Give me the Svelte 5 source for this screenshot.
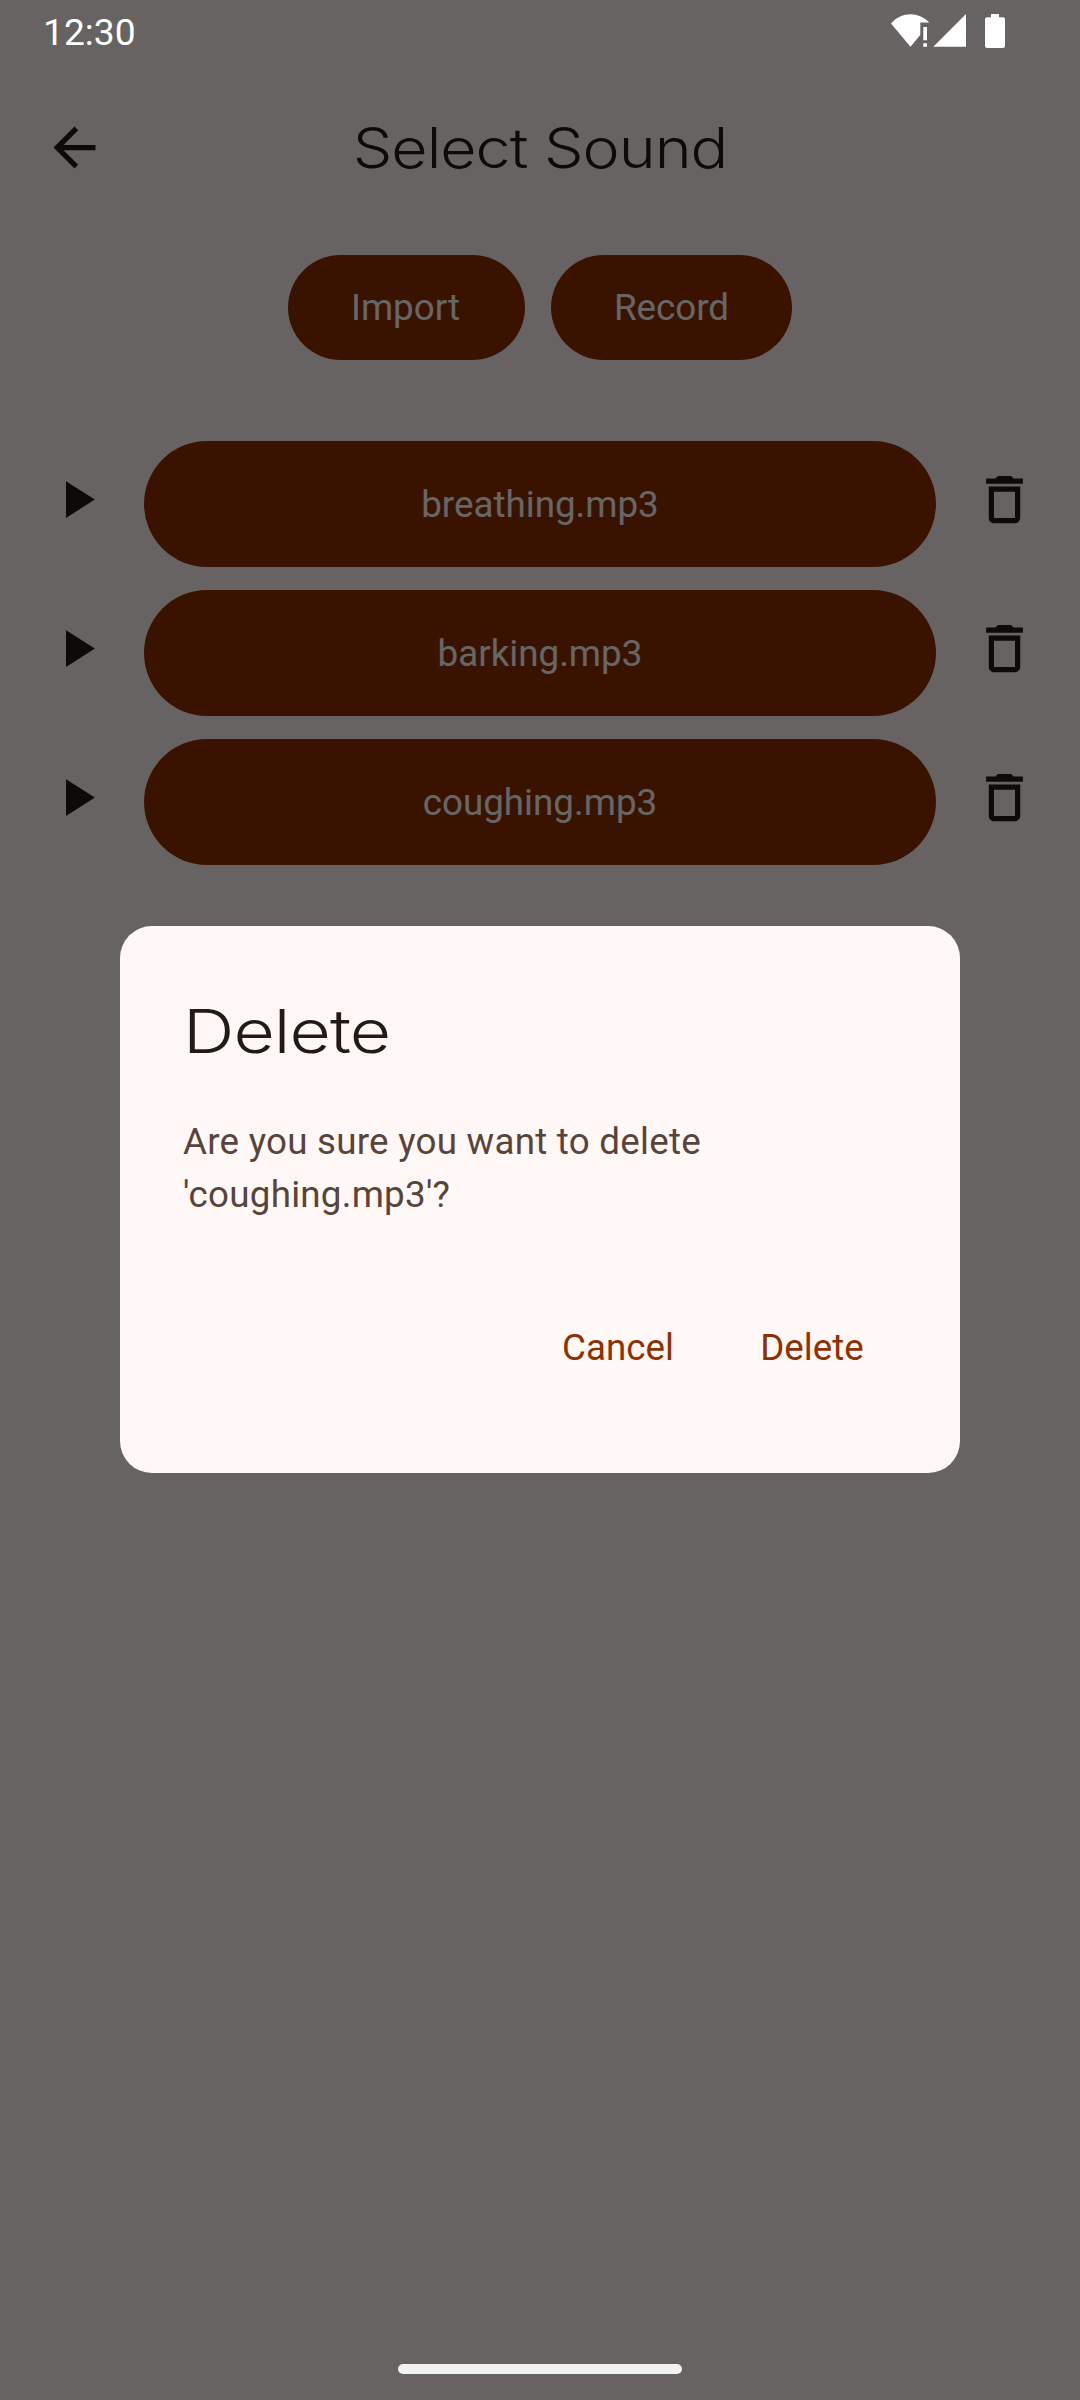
<script>
  const sounds = ['breathing.mp3', 'barking.mp3', 'coughing.mp3'];
  const selected = sounds[2];
</script>

<div class="screen">
  <main class="page">
    <header>
      <svg class="icon" viewBox="0 0 24 24"><path d="M20 11H7.83l5.59-5.59L12 4l-8 8 8 8 1.41-1.41L7.83 13H20v-2z" /></svg>
      <h1>Select Sound</h1>
    </header>
    <div class="tools">
      <button class="import"><span>Import</span></button>
      <button class="record"><span>Record</span></button>
    </div>
    <ul>
      {#each sounds as sound}
        <li>
          <svg class="icon" viewBox="0 0 24 24"><path d="M8 5v14l11-7z" /></svg>
          <button class="sound"><span>{sound}</span></button>
          <svg class="icon" viewBox="0 0 24 24"><path d="M6 19c0 1.1.9 2 2 2h8c1.1 0 2-.9 2-2V7H6v12zM8 9h8v10H8V9zm7.5-5l-1-1h-5l-1 1H5v2h14V4h-3.5z" /></svg>
        </li>
      {/each}
    </ul>
  </main>

  <div class="overlay">
    <div class="status">
      <span class="time">12:30</span>
      <svg class="indicators" width="116" height="36" viewBox="0 0 116 36">
        <path d="M0 9.5C11-2.5 27-2.5 38.3 8.5H29.3V21L19.5 32.7zM32.3 13h3.7v13.3h-3.7zM32.3 29.3h3.7v3.4h-3.7z" />
        <path d="M42.3 32.7L75 0v32.7z" />
        <path d="M100 0h8v3.3h4a2 2 0 0 1 2 2V32a2 2 0 0 1-2 2H96a2 2 0 0 1-2-2V5.3a2 2 0 0 1 2-2h4z" />
      </svg>
    </div>
    <section class="dialog">
      <h2>Delete</h2>
      <p>Are you sure you want to delete<br />'{selected}'?</p>
      <div class="actions">
        <button class="cancel">Cancel</button>
        <button class="confirm">Delete</button>
      </div>
    </section>
    <div class="handle"></div>
  </div>
</div>

<style>
  :global(body) { margin: 0; background: #fff8f6; }
  .screen {
    display: grid;
    width: 1080px;
    height: 2400px;
    overflow: hidden;
    background: #fff8f6;
    font-family: Roboto, sans-serif;
    font-size: 36.75px;
  }
  .page, .overlay { grid-area: 1 / 1; box-sizing: border-box; min-width: 0; }
  .page { padding-top: 95px; color: #231917; }
  .icon { width: 63px; height: 63px; fill: currentColor; flex: none; }
  header {
    display: grid;
    grid-template-columns: 63px 1fr 63px;
    align-items: center;
    height: 105px;
    padding: 0 43px;
  }
  h1, h2 { margin: 0; font-family: Inter, sans-serif; font-weight: 300; white-space: nowrap; }
  h1 { font-size: 55.5px; line-height: 70px; letter-spacing: -0.9px; text-align: center; transform: scaleX(1.13); }
  button {
    box-sizing: border-box;
    border: 0;
    padding: 0;
    font: inherit;
    text-align: center;
  }
  .tools { display: flex; gap: 26px; margin: 55px 0 0 288px; }
  .tools button, .sound { color: #fff; background: #8f3000; }
  .tools button { height: 105px; border-radius: 53px; }
  .tools .import { width: 237px; padding-right: 2px; }
  .record { width: 241px; }
  ul {
    display: flex;
    flex-direction: column;
    gap: 23px;
    margin: 81px 0 0;
    padding: 0 44px 0 45px;
    list-style: none;
  }
  li { display: flex; align-items: flex-start; gap: 37px; height: 126px; }
  li .icon { margin-top: 27px; }
  .sound { width: 792px; height: 126px; margin-left: -1px; border-radius: 63px; }
  .overlay { display: flex; flex-direction: column; align-items: center; z-index: 1; background: rgba(0, 0, 0, 0.6); }
  .status {
    box-sizing: border-box;
    display: flex;
    justify-content: space-between;
    width: 100%;
    height: 63px;
    padding: 14px 73px 0 43px;
    color: #fff;
  }
  .time { font-size: 37.2px; line-height: 36px; }
  .indicators { fill: #fff; }
  .dialog {
    box-sizing: border-box;
    width: 840px;
    height: 547px;
    margin-top: 863px;
    padding: 63px;
    border-radius: 32px;
    background: #fff8f6;
  }
  h2 { font-size: 60.5px; line-height: 84px; letter-spacing: -0.8px; color: #231917; transform: scaleX(1.18); transform-origin: left; }
  p { margin: 43px 0 0; line-height: 52.5px; letter-spacing: 0.24px; color: #5a4339; white-space: nowrap; }
  .actions { display: flex; justify-content: flex-end; gap: 21px; margin-top: 74px; padding-right: 1px; }
  .actions button { height: 105px; color: #8f3000; background: none; }
  .cancel { width: 178px; }
  .confirm { width: 168px; }
  .handle { width: 284px; height: 10px; margin-top: 891px; border-radius: 5px; background: #f2f2f2; }
</style>
